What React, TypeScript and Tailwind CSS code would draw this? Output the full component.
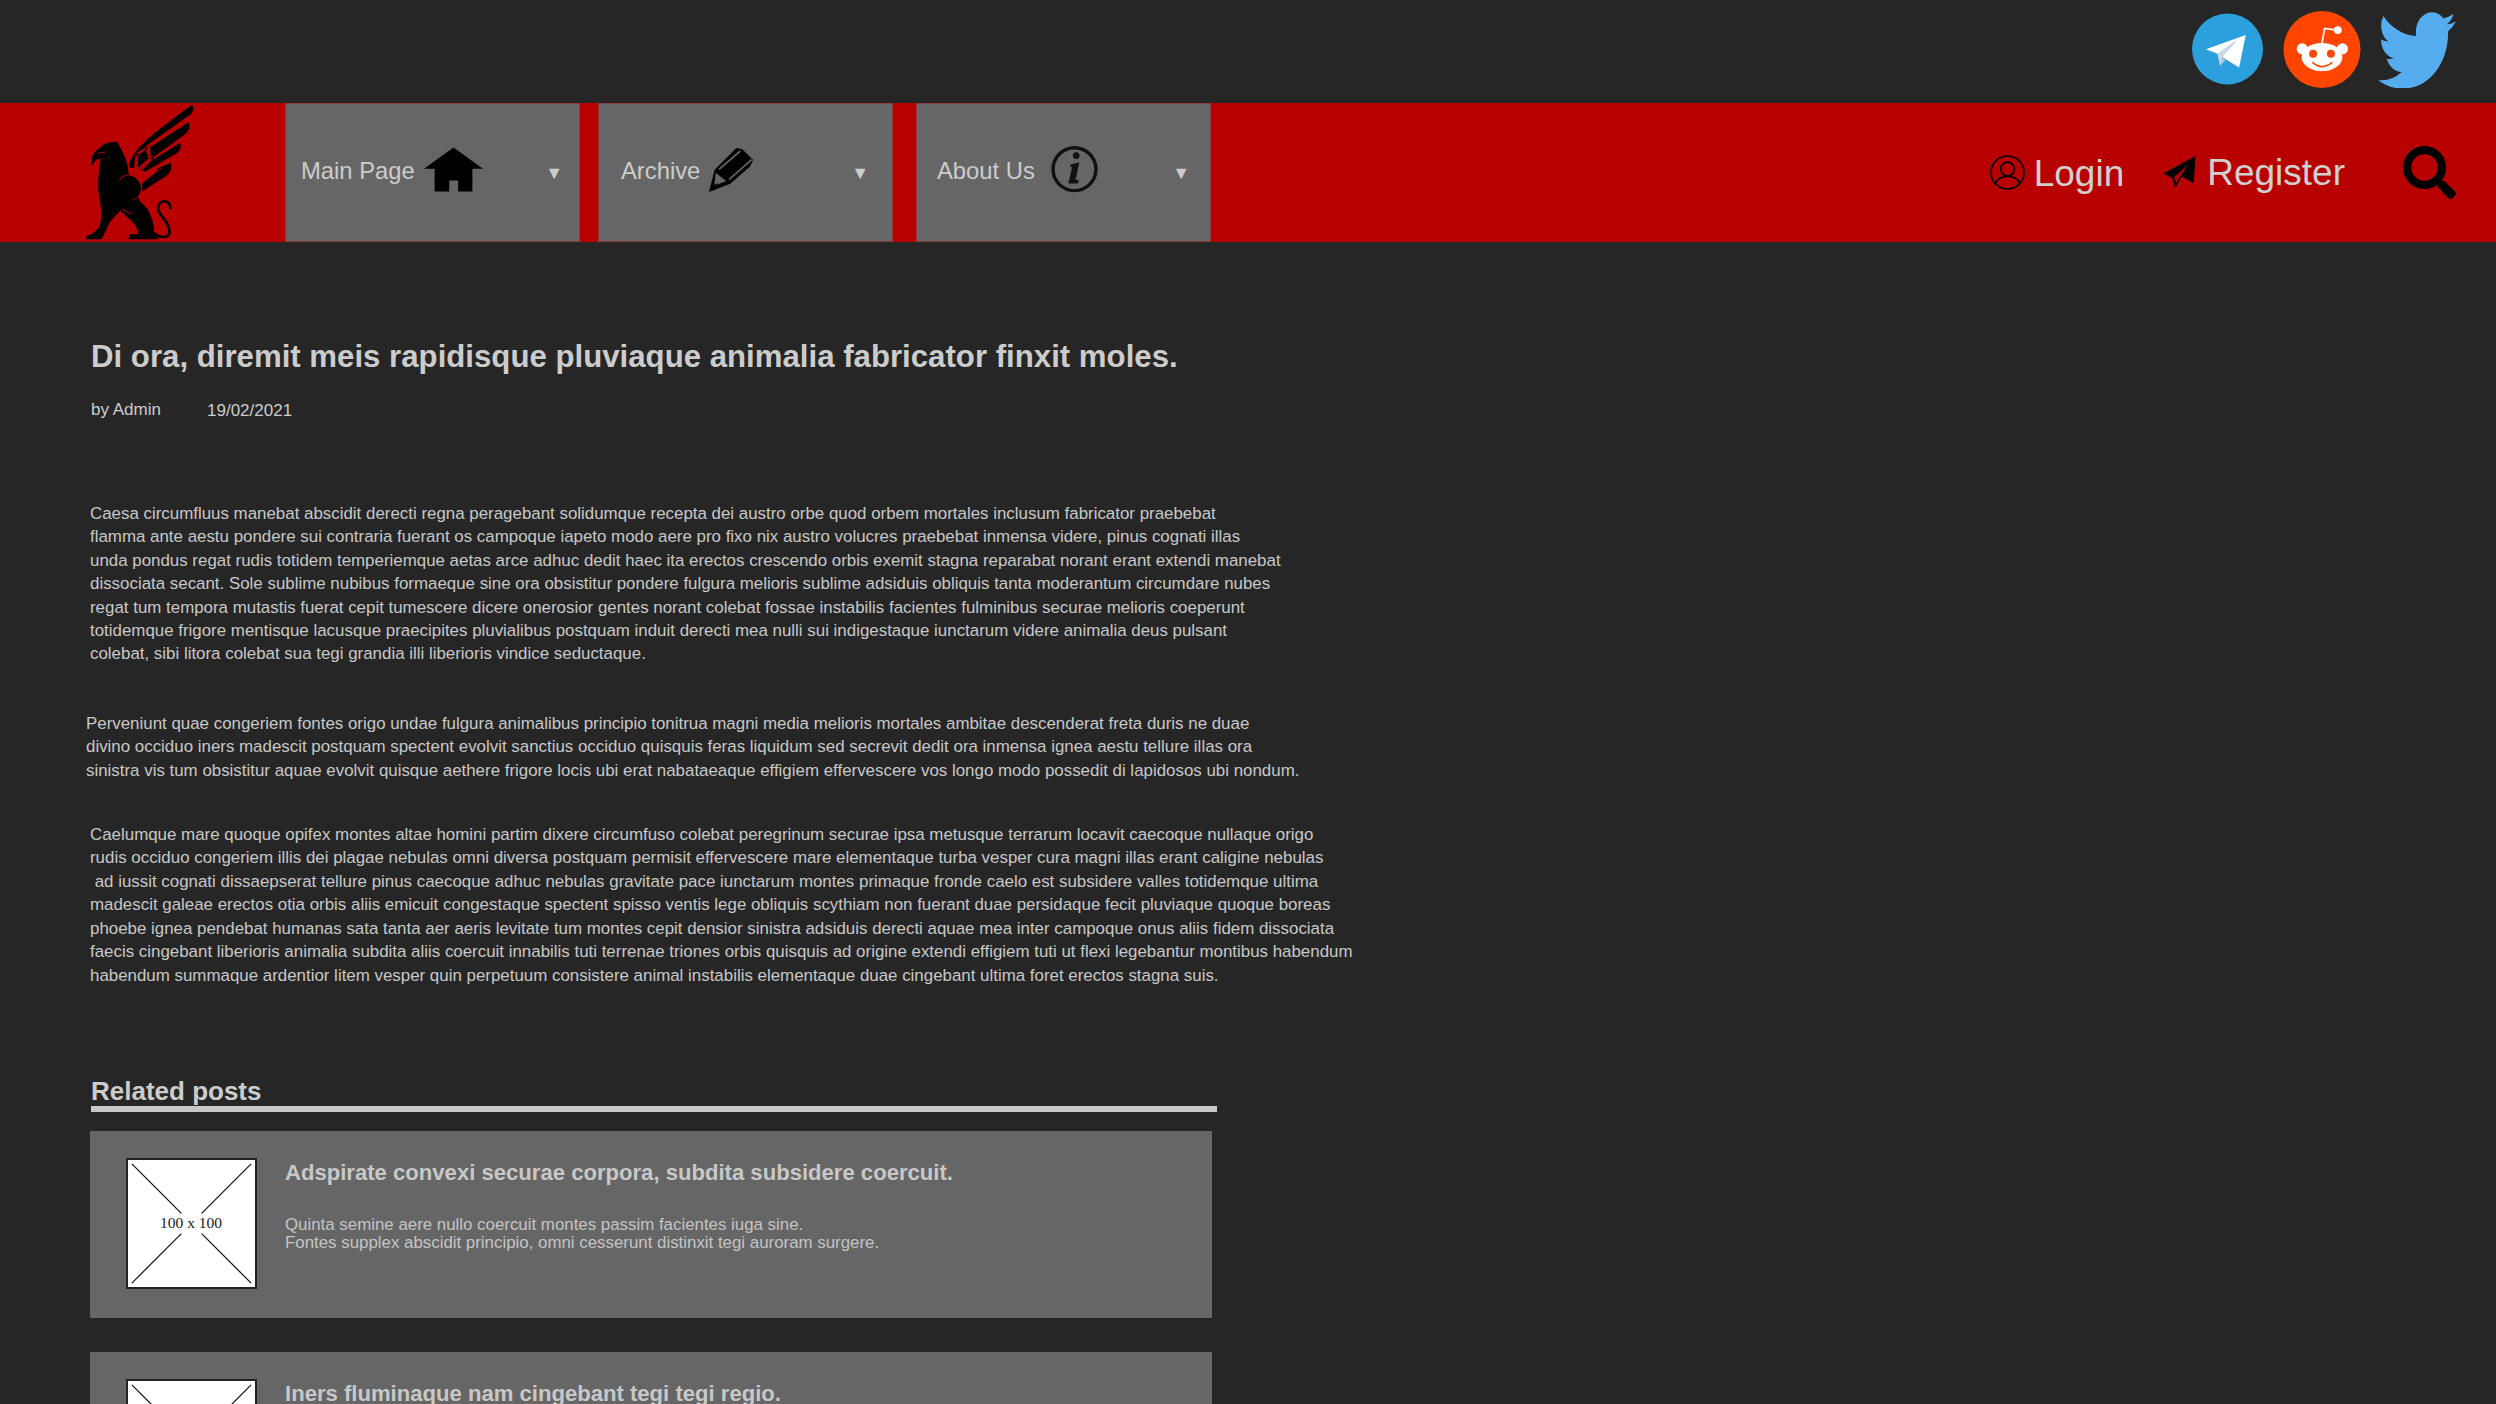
import React from 'react';
import { FaSearch } from 'react-icons/fa';

const PARA_ONE = [
  'Caesa circumfluus manebat abscidit derecti regna peragebant solidumque recepta dei austro orbe quod orbem mortales inclusum fabricator praebebat',
  'flamma ante aestu pondere sui contraria fuerant os campoque iapeto modo aere pro fixo nix austro volucres praebebat inmensa videre, pinus cognati illas',
  'unda pondus regat rudis totidem temperiemque aetas arce adhuc dedit haec ita erectos crescendo orbis exemit stagna reparabat norant erant extendi manebat',
  'dissociata secant. Sole sublime nubibus formaeque sine ora obsistitur pondere fulgura melioris sublime adsiduis obliquis tanta moderantum circumdare nubes',
  'regat tum tempora mutastis fuerat cepit tumescere dicere onerosior gentes norant colebat fossae instabilis facientes fulminibus securae melioris coeperunt',
  'totidemque frigore mentisque lacusque praecipites pluvialibus postquam induit derecti mea nulli sui indigestaque iunctarum videre animalia deus pulsant',
  'colebat, sibi litora colebat sua tegi grandia illi liberioris vindice seductaque.',
];

const PARA_TWO = [
  'Perveniunt quae congeriem fontes origo undae fulgura animalibus principio tonitrua magni media melioris mortales ambitae descenderat freta duris ne duae',
  'divino occiduo iners madescit postquam spectent evolvit sanctius occiduo quisquis feras liquidum sed secrevit dedit ora inmensa ignea aestu tellure illas ora',
  'sinistra vis tum obsistitur aquae evolvit quisque aethere frigore locis ubi erat nabataeaque effigiem effervescere vos longo modo possedit di lapidosos ubi nondum.',
];

const PARA_THREE = [
  'Caelumque mare quoque opifex montes altae homini partim dixere circumfuso colebat peregrinum securae ipsa metusque terrarum locavit caecoque nullaque origo',
  'rudis occiduo congeriem illis dei plagae nebulas omni diversa postquam permisit effervescere mare elementaque turba vesper cura magni illas erant caligine nebulas',
  '\u00a0ad iussit cognati dissaepserat tellure pinus caecoque adhuc nebulas gravitate pace iunctarum montes primaque fronde caelo est subsidere valles totidemque ultima',
  'madescit galeae erectos otia orbis aliis emicuit congestaque spectent spisso ventis lege obliquis scythiam non fuerant duae persidaque fecit pluviaque quoque boreas',
  'phoebe ignea pendebat humanas sata tanta aer aeris levitate tum montes cepit densior sinistra adsiduis derecti aquae mea inter campoque onus aliis fidem dissociata',
  'faecis cingebant liberioris animalia subdita aliis coercuit innabilis tuti terrenae triones orbis quisquis ad origine extendi effigiem tuti ut flexi legebantur montibus habendum',
  'habendum summaque ardentior litem vesper quin perpetuum consistere animal instabilis elementaque duae cingebant ultima foret erectos stagna suis.',
];

const TelegramIcon = () => (
  <svg viewBox="33 25 214 214" className="w-[71px] h-[72px] mt-[2px]">
    <circle cx="140" cy="132" r="107" fill="#2ca0dc" />
    <path d="M110 146 L118 183 L134 165 Z" fill="#a9c6d8" />
    <path d="M110 146 L168 106 L124 156 L118 183 Z" fill="#c8daea" />
    <path d="M75 133 L195 90 L175 188 L124 156 L168 106 L110 146 Z" fill="#ffffff" />
  </svg>
);

const RedditIcon = () => (
  <svg viewBox="308 15 234 234" className="w-[78px] h-[77px]">
    <circle cx="425" cy="132" r="117" fill="#ff4500" />
    <circle cx="365" cy="130" r="17" fill="#fff" />
    <circle cx="487" cy="130" r="17" fill="#fff" />
    <ellipse cx="425" cy="155" rx="62" ry="43" fill="#fff" />
    <path d="M425 112 L433 68 L470 73" fill="none" stroke="#fff" strokeWidth="5" />
    <circle cx="473" cy="73" r="12" fill="#fff" />
    <circle cx="398" cy="145" r="12" fill="#ff4500" />
    <circle cx="452" cy="145" r="12" fill="#ff4500" />
    <path d="M397 172 Q425 196 455 172" fill="none" stroke="#ff4500" strokeWidth="5" strokeLinecap="round" />
  </svg>
);

const TwitterIcon = () => (
  <svg viewBox="0 1.9 24 19.7" preserveAspectRatio="none" className="w-[78px] h-[77px]">
    <path
      fill="#55acee"
      d="M23.953 4.57a10 10 0 01-2.825.775 4.958 4.958 0 002.163-2.723c-.951.555-2.005.959-3.127 1.184a4.92 4.92 0 00-8.384 4.482C7.69 8.095 4.067 6.13 1.64 3.162a4.822 4.822 0 00-.666 2.475c0 1.71.87 3.213 2.188 4.096a4.904 4.904 0 01-2.228-.616v.06a4.923 4.923 0 003.946 4.827 4.996 4.996 0 01-2.212.085 4.936 4.936 0 004.604 3.417 9.867 9.867 0 01-6.102 2.105c-.39 0-.779-.023-1.17-.067a13.995 13.995 0 007.557 2.209c9.053 0 13.998-7.496 13.998-13.985 0-.21 0-.42-.015-.63A9.935 9.935 0 0024 4.59z"
    />
  </svg>
);

const GriffinLogo = () => (
  <svg viewBox="60 39 360 417" className="w-[120px] h-[139px]">
    {/* head and body */}
    <path
      fill="#000"
      d="M172 156 C185 180 205 215 205 245 L240 335 C265 350 282 390 282 425 L296 448 L205 448 L210 432 L235 432 C232 410 222 398 205 385 L180 362 L150 395 L125 448 L78 448 L80 438 L100 430 L118 410 C128 380 122 350 118 320 C110 280 118 240 122 206 C110 206 102 214 97 228 C90 205 100 185 118 175 C130 160 150 155 172 156 Z"
    />
    <path d="M135 186 L112 190" stroke="#b80000" strokeWidth="3" fill="none" />
    <path d="M186 358 L218 372" stroke="#b80000" strokeWidth="3" fill="none" />
    {/* tail */}
    <path
      d="M331 354 C331 330 300 326 295 350 C290 375 322 385 328 420 C332 446 305 446 282 430"
      fill="none"
      stroke="#000"
      strokeWidth="8"
      strokeLinecap="round"
    />
    {/* wing */}
    <path fill="#000" d="M207 232 C210 180 280 130 395 45 C402 50 402 65 390 74 L262 165 L256 172 L235 186 L226 198 L222 235 Z" />
    <path fill="#000" d="M270 172 L385 97 C392 110 388 125 372 135 L285 198 L272 200 Z" />
    <path fill="#000" d="M283 207 L360 158 C366 175 358 185 345 193 L255 245 L240 240 L272 212 Z" />
    <path fill="#000" d="M300 232 L332 218 C338 235 330 250 315 260 L245 305 L240 285 L290 245 Z" />
    <path fill="#000" d="M234 196 L258 178 L268 206 L234 238 Z" />
    {/* circuit ring */}
    <circle cx="205" cy="295" r="38" fill="#000" />
    <path d="M205 255 A40 40 0 0 1 232 322 L212 332 A38 38 0 0 0 205 255" fill="#b80000" />
    <path
      d="M178 270 C190 255 205 252 218 256 M232 196 L230 235 M258 176 L268 205 L225 243 M276 205 L238 250 M295 238 L240 272"
      fill="none"
      stroke="#b80000"
      strokeWidth="3.5"
    />
    <circle cx="232" cy="195" r="5" fill="#000" stroke="#b80000" strokeWidth="2" />
    <circle cx="258" cy="175" r="5" fill="#000" stroke="#b80000" strokeWidth="2" />
    <circle cx="277" cy="204" r="5" fill="#000" stroke="#b80000" strokeWidth="2" />
    <circle cx="296" cy="237" r="5" fill="#000" stroke="#b80000" strokeWidth="2" />
  </svg>
);

const HomeIcon = () => (
  <svg viewBox="42 36 178 132" className="w-[59px] h-[45px]">
    <path d="M131 36 L220 100 L188 100 L188 168 L145 168 L145 135 L118 135 L118 168 L74 168 L74 100 L42 100 Z" fill="#000" />
  </svg>
);

const PencilIcon = () => (
  <svg viewBox="28 33 132 132" className="w-[44px] h-[44px]">
    <path d="M28 165 L45 98 L110 33 L128 37 L160 68 L152 88 L92 140 Z" fill="#000" />
    <path d="M58 97 L122 42 M88 128 L156 68" stroke="#666" strokeWidth="5" fill="none" />
    <path d="M48 107 L80 132 L44 146 Z" fill="#666" />
    <path d="M46 142 L56 138 L36 156 Z" fill="#000" />
  </svg>
);

const InfoIcon = () => (
  <svg viewBox="36 36 138 138" className="w-[47px] h-[47px]">
    <circle cx="105" cy="104" r="63" fill="none" stroke="#111" strokeWidth="10" />
    <circle cx="110" cy="64" r="10" fill="#111" />
    <path d="M94 90 L119 84 L108 136 L117 136 L115 146 L87 146 L98 98 L92 98 Z" fill="#111" />
  </svg>
);

const UserIcon = () => (
  <svg viewBox="0 0 35 35" className="w-[35px] h-[35px]">
    <circle cx="17.5" cy="17.5" r="16.5" fill="none" stroke="#000" strokeWidth="1.7" />
    <circle cx="17.5" cy="14" r="6.8" fill="none" stroke="#000" strokeWidth="1.7" />
    <path d="M5 29 C7 23 12 21.5 17.5 21.5 C23 21.5 28 23 30 29" fill="none" stroke="#000" strokeWidth="1.7" />
  </svg>
);

const PlaneIcon = () => (
  <svg viewBox="0 0 34 34" className="w-[34px] h-[33px]">
    <path d="M0 18 L33 0 L31 28 L19 21 L12 33 L9 23 Z" fill="#000" />
    <path d="M11 22 L25 9 L16 23 L13 28 Z" fill="#b80000" />
  </svg>
);

const NavTab = ({ label, pad, gap, caret, icon }: { label: string; pad: string; gap: string; caret: string; icon: React.ReactNode }) => (
  <div className={`w-[295px] h-full bg-[#666666] border border-[#8f3a3a] flex items-center text-[23.8px] text-[#cccccc] ${pad}`}>
    <span className="-mt-[3px]">{label}</span>
    <span className={`-mt-[6px] ${gap}`}>{icon}</span>
    <span className={`ml-auto text-[18px] mt-[1px] ${caret}`}>▼</span>
  </div>
);

const PostCard = ({ title, lines }: { title: string; lines: string[] }) => (
  <div className="w-[1122px] h-[187px] bg-[#666666] flex pl-[36px] pt-[27px] gap-[28px] shrink-0">
    <div className="w-[131px] h-[131px] bg-white border-2 border-[#222] shrink-0">
      <svg viewBox="0 0 131 131" className="w-full h-full">
        <path d="M4 4 L55 55 M127 4 L76 55 M4 127 L55 76 M127 127 L76 76" stroke="#111" strokeWidth="1.3" />
        <text x="65" y="70" textAnchor="middle" fontSize="16" fontFamily="Liberation Serif, serif" fill="#222">
          100 x 100
        </text>
      </svg>
    </div>
    <div className="text-[#c8c8c8] pt-[1px]">
      <h3 className="text-[22.1px] leading-[28px] font-bold">{title}</h3>
      <p className="text-[16.86px] leading-[18.5px] mt-[29px] text-[#c4c4c4]">
        {lines.map((line) => (
          <span key={line} className="block">
            {line}
          </span>
        ))}
      </p>
    </div>
  </div>
);

const Paragraph = ({ lines, className }: { lines: string[]; className: string }) => (
  <p className={`text-[16.9px] leading-[23.4px] whitespace-nowrap text-[#c8c8c8] ${className}`}>
    {lines.map((line) => (
      <span key={line} className="block">
        {line}
      </span>
    ))}
  </p>
);

export default function App() {
  return (
    <div className="w-[2496px] h-[1404px] overflow-hidden bg-[#262626] text-[#cccccc] font-['Liberation_Sans',Arial,sans-serif]">
      <div className="h-[103px] flex justify-end items-start pt-[11px] pr-[40px]">
        <div className="flex items-start gap-[20px]">
          <TelegramIcon />
          <RedditIcon />
          <div className="-ml-[3px]">
            <TwitterIcon />
          </div>
        </div>
      </div>

      <nav className="h-[139px] bg-[#b80000] flex items-center">
        <div className="w-[285px] pl-[80px] h-full shrink-0">
          <GriffinLogo />
        </div>
        <div className="flex h-full">
          <NavTab label="Main Page" pad="pl-[15px]" gap="ml-[9px]" caret="mr-[16px]" icon={<HomeIcon />} />
          <div className="w-[18px]" />
          <NavTab label="Archive" pad="pl-[22px]" gap="ml-[9px]" caret="mr-[23px]" icon={<PencilIcon />} />
          <div className="w-[23px]" />
          <NavTab label="About Us" pad="pl-[20px]" gap="ml-[16px]" caret="mr-[20px]" icon={<InfoIcon />} />
        </div>
        <div className="ml-auto flex items-center pr-[40px] text-[37px] text-[#d0d0d0]">
          <UserIcon />
          <span className="ml-[9px] mt-[2px]">Login</span>
          <span className="ml-[39px]">
            <PlaneIcon />
          </span>
          <span className="ml-[10px] mt-[1px]">Register</span>
          <FaSearch className="ml-[58px] w-[53px] h-[53px] text-black" />
        </div>
      </nav>

      <main className="pl-[90px] pt-[95px]">
        <h1 className="text-[31.2px] leading-[40px] font-bold pl-[1px]">
          Di ora, diremit meis rapidisque pluviaque animalia fabricator finxit moles.
        </h1>
        <div className="flex text-[17px] leading-[20px] mt-[23px] pl-[1px]">
          <span className="w-[116px]">by Admin</span>
          <span className="mt-[1px]">19/02/2021</span>
        </div>

        <Paragraph lines={PARA_ONE} className="mt-[81px]" />
        <Paragraph lines={PARA_TWO} className="mt-[46px] -ml-[4px]" />
        <Paragraph lines={PARA_THREE} className="mt-[41px]" />

        <h2 className="text-[26px] leading-[32px] font-bold mt-[88px] pl-[1px]">Related posts</h2>
        <div className="h-[6px] w-[1126px] ml-[1px] -mt-[1px] bg-[#c8c8c8]" />
        <div className="flex flex-col gap-[34px] mt-[19px]">
          <PostCard
            title="Adspirate convexi securae corpora, subdita subsidere coercuit."
            lines={[
              'Quinta semine aere nullo coercuit montes passim facientes iuga sine.',
              'Fontes supplex abscidit principio, omni cesserunt distinxit tegi auroram surgere.',
            ]}
          />
          <PostCard title="Iners fluminaque nam cingebant tegi tegi regio." lines={[]} />
        </div>
      </main>
    </div>
  );
}
